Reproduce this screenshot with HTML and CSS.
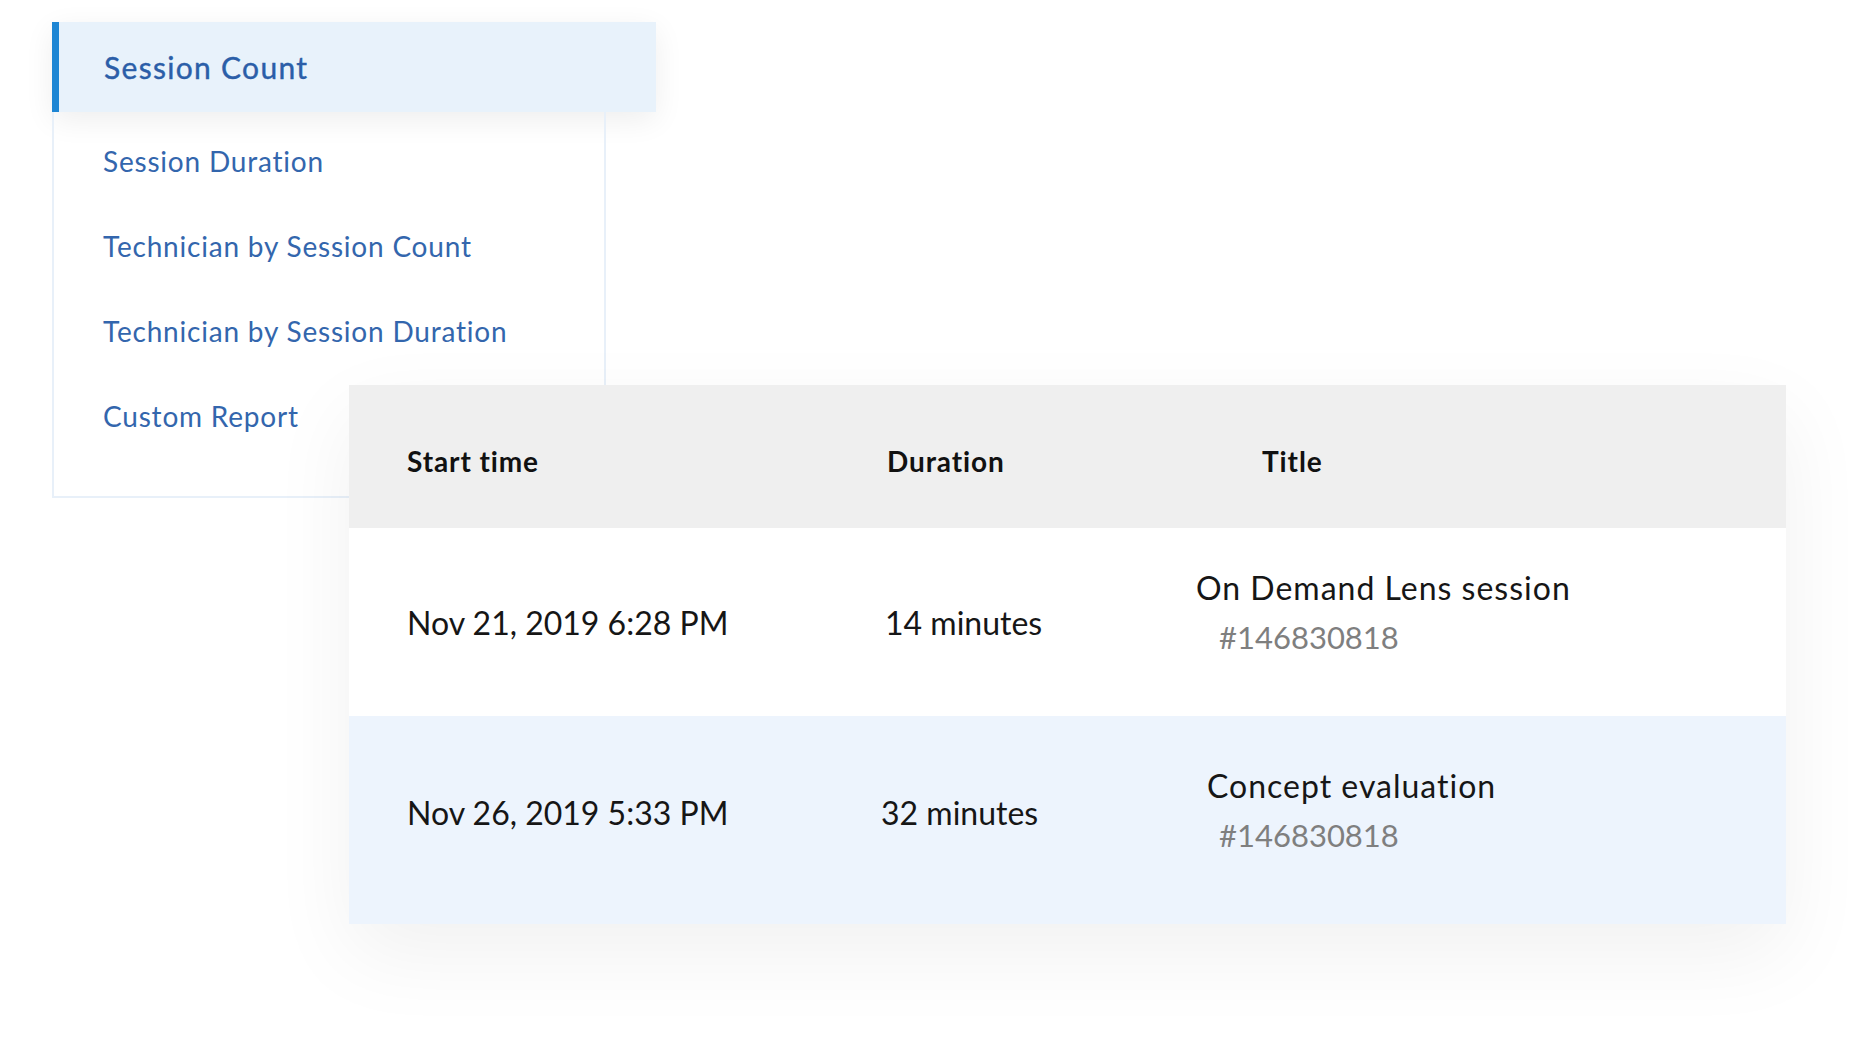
FILE: index.html
```html
<!DOCTYPE html>
<html lang="en">
<head>
    <meta charset="UTF-8">
    <meta name="viewport" content="width=device-width, initial-scale=1.0">
    <title>Session Reports</title>
    <link rel="stylesheet" href="styles.css">
</head>
<body>
    <div class="canvas">
        <div class="menu">
            <div class="menu-active">Session Count</div>
            <ul class="menu-list">
                <li>Session Duration</li>
                <li>Technician by Session Count</li>
                <li>Technician by Session Duration</li>
                <li>Custom Report</li>
            </ul>
        </div>

        <div class="sessions">
            <div class="row head">
                <div class="cell">Start time</div>
                <div class="cell">Duration</div>
                <div class="cell title-head">Title</div>
            </div>
            <div class="row first">
                <div class="cell">Nov 21, 2019 6:28 PM</div>
                <div class="cell">14 minutes</div>
                <div class="cell title-cell">
                    <div class="title">On Demand Lens session</div>
                    <div class="sid">#146830818</div>
                </div>
            </div>
            <div class="row second">
                <div class="cell">Nov 26, 2019 5:33 PM</div>
                <div class="cell dur-2">32 minutes</div>
                <div class="cell title-cell-2">
                    <div class="title title-2">Concept evaluation</div>
                    <div class="sid">#146830818</div>
                </div>
            </div>
        </div>
    </div>
</body>
</html>
```

FILE: styles.css
```css
html, body {
    height: 100%;
}
body {
    margin: 0;
    background: #ffffff;
    font-family: Lato, "Open Sans", Arial, sans-serif;
}
.canvas {
    min-height: 100%;
    box-sizing: border-box;
    padding: 22px 0 0 52px;
}
.menu {
    width: 604px;
}
.menu-active {
    height: 90px;
    box-sizing: border-box;
    background: #e8f2fb;
    border-left: 7px solid #1e86d4;
    padding-left: 45px;
    font-size: 30px;
    letter-spacing: 1.3px;
    line-height: 90px;
    color: #2b5ea8;
    -webkit-text-stroke: 0.4px #2b5ea8;
    box-shadow: 0 8px 30px rgba(0, 0, 0, 0.07);
}
.menu-list {
    list-style: none;
    margin: 0;
    width: 554px;
    height: 386px;
    box-sizing: border-box;
    padding: 7px 0 0 49px;
    border: 2px solid #e8f0f9;
    border-top: none;
}
.menu-list li {
    font-size: 28px;
    letter-spacing: 0.8px;
    line-height: 85px;
    color: #3366ad;
}
.sessions {
    position: relative;
    width: 1437px;
    margin: -113px 0 0 297px;
    background: #ffffff;
    box-shadow: 0 30px 80px rgba(0, 0, 0, 0.06);
}
.row {
    display: grid;
    grid-template-columns: 478px 311px auto;
    align-items: center;
    padding-left: 58px;
    box-sizing: border-box;
}
.head {
    height: 143px;
    padding-top: 8px;
    background: #efefef;
    font-weight: bold;
    font-size: 28px;
    letter-spacing: 0.9px;
    color: #111111;
}
.first {
    height: 188px;
    font-size: 32px;
    color: #161616;
}
.second {
    height: 208px;
    padding-bottom: 16px;
    background: #edf4fd;
    font-size: 32px;
    color: #161616;
}
.head .cell:nth-child(2) {
    padding-left: 2px;
}
.title-head {
    padding-left: 66px;
}
.dur-2 {
    margin-left: -4px;
}
.title-cell {
    margin-bottom: 20px;
}
.title-cell-2 {
    margin-bottom: 4px;
}
.title {
    font-size: 32px;
    letter-spacing: 1px;
    line-height: 40px;
}
.title-2 {
    padding-left: 11px;
}
.sid {
    margin-top: 9px;
    padding-left: 23px;
    font-size: 31px;
    line-height: 40px;
    color: #7f7f7f;
}
```
